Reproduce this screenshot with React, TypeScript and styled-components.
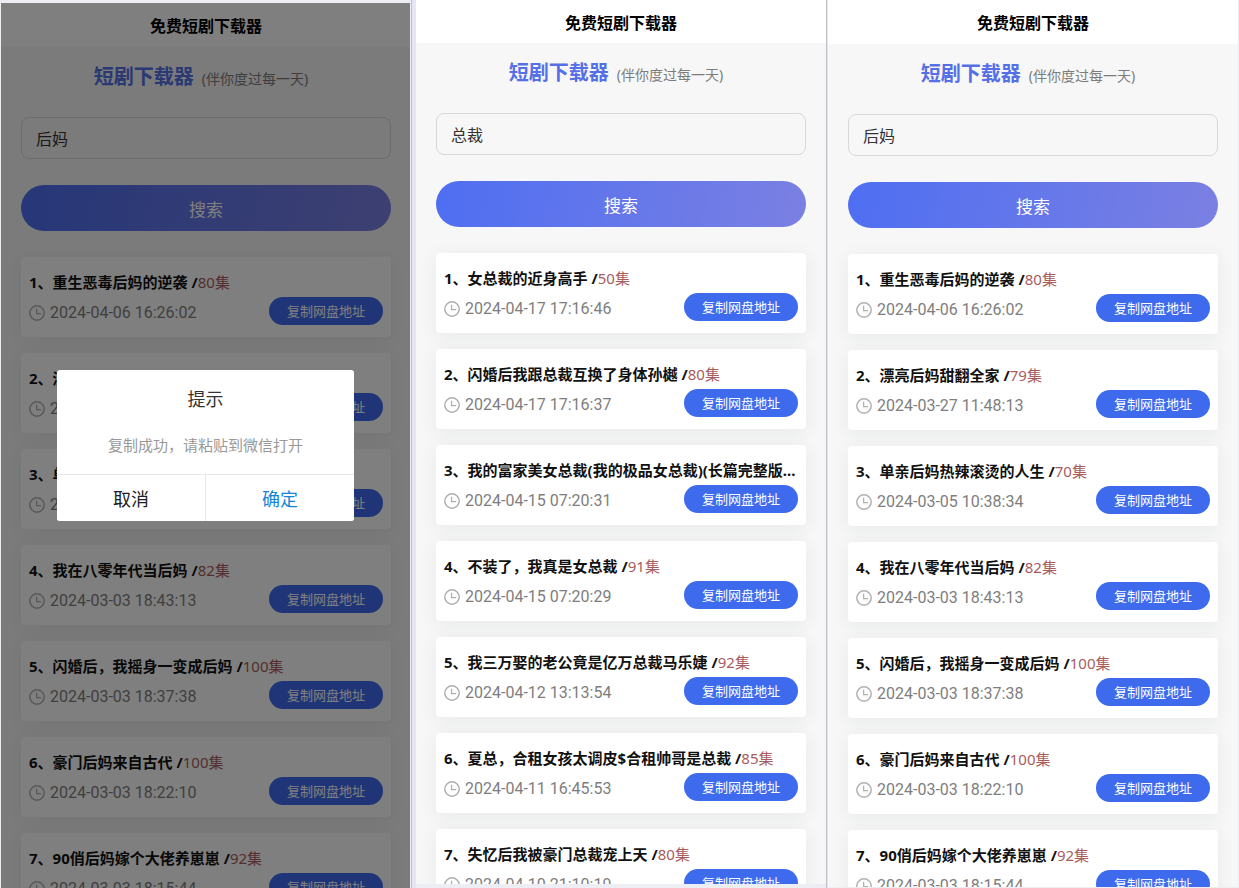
import React from 'react';
import styled, { createGlobalStyle } from 'styled-components';

const GlobalStyle = createGlobalStyle`
  *, *::before, *::after { box-sizing: border-box; }
  body {
    margin: 0;
    background: #ededf4;
    font-family: "Noto Sans", "Noto Sans CJK SC", sans-serif;
    color: #111;
  }
  button, input { font: inherit; }
`;

const Board = styled.main`
  display: flex;
  height: 100vh;
  padding: 0 1px;
  overflow: hidden;
`;

const Gutter = styled.div<{ $size: number }>`
  flex: 0 0 ${(p) => p.$size}px;
  border-left: 1px solid #bfbfca;
  background: #e6e6f2;
`;

const Screen = styled.section<{ $top: number; $bottom: number }>`
  position: relative;
  flex: 1 1 0;
  min-width: 0;
  margin-top: ${(p) => p.$top}px;
  margin-bottom: ${(p) => p.$bottom}px;
  background: #f7f7f7;
  overflow: hidden;
`;

const NavBar = styled.header<{ $height: number }>`
  display: flex;
  align-items: center;
  justify-content: center;
  height: ${(p) => p.$height}px;
  padding-top: 2px;
  background: #fff;
`;

const NavTitle = styled.h1`
  margin: 0;
  font-size: 16px;
  line-height: 24px;
  font-weight: 700;
  color: #000;
`;

const Content = styled.div`
  padding: 0 20px;
`;

const Brand = styled.div`
  display: flex;
  align-items: baseline;
  justify-content: center;
  gap: 8px;
  height: 64px;
  padding: 15px 10px 0 0;
  margin-bottom: 6px;
  line-height: 30px;
`;

const BrandName = styled.h2`
  margin: 0;
  font-size: 20px;
  font-weight: 700;
  color: #5570e6;
`;

const BrandNote = styled.span`
  font-size: 14px;
  color: #7c7c7c;
`;

const SearchForm = styled.form`
  display: flex;
  flex-direction: column;
  gap: 26px;
  margin-bottom: 26px;
`;

const SearchInput = styled.input`
  width: 100%;
  height: 42px;
  padding: 0 14px;
  border: 1px solid #d8d8d8;
  border-radius: 8px;
  background: transparent;
  font-size: 16px;
  color: #333;
  outline: none;
`;

const SearchButton = styled.button`
  height: 46px;
  padding: 0;
  border: 0;
  border-radius: 23px;
  background: linear-gradient(100deg, #4e6ef2, #7b80e2);
  font-size: 17px;
  color: #fff;
`;

const List = styled.ul`
  display: flex;
  flex-direction: column;
  gap: 16px;
  margin: 0;
  padding: 0;
  list-style: none;
`;

const Card = styled.li`
  height: 80px;
  padding: 15px 8px 12px;
  border-radius: 4px;
  background: #fff;
  box-shadow: 0 3px 18px rgba(40, 60, 60, 0.08);
`;

const DramaTitle = styled.h3`
  margin: 0 0 5px;
  font-size: 15px;
  line-height: 20px;
  font-weight: 700;
  white-space: nowrap;
  overflow: hidden;
  text-overflow: ellipsis;
`;

const Episodes = styled.span`
  font-weight: 400;
  color: #a85c5c;
`;

const Meta = styled.div`
  display: flex;
  align-items: center;
  justify-content: space-between;
`;

const Stamp = styled.time`
  display: flex;
  align-items: center;
  gap: 5px;
  padding-top: 4px;
  font-family: Roboto, sans-serif;
  font-size: 16px;
  line-height: 20px;
  color: #7e7e7e;
`;

const CopyButton = styled.button`
  width: 114px;
  height: 28px;
  padding: 0;
  border: 0;
  border-radius: 14px;
  background: #3e6bee;
  font-size: 13px;
  line-height: 20px;
  color: #fff;
`;

const Overlay = styled.div`
  position: absolute;
  inset: 0;
  display: flex;
  align-items: center;
  justify-content: center;
  border-right: 1px solid #efeff4;
  background: rgba(0, 0, 0, 0.5);
`;

const Dialog = styled.div`
  width: 80%;
  max-width: 297px;
  border-radius: 3px;
  background: #fff;
  text-align: center;
  overflow: hidden;
`;

const DialogTitle = styled.h2`
  margin: 0;
  padding: 17px 24px 0;
  font-size: 18px;
  line-height: 24px;
  font-weight: 400;
  color: #333;
`;

const DialogText = styled.p`
  margin: 0;
  padding: 24px 16px 19px;
  font-size: 15px;
  line-height: 20px;
  color: #999;
`;

const DialogActions = styled.div`
  display: flex;
  border-top: 1px solid #e8e8e8;
`;

const DialogButton = styled.button<{ $primary?: boolean }>`
  flex: 1;
  height: 46px;
  padding: 0;
  border: 0;
  border-left: ${(p) => (p.$primary ? '1px solid #e8e8e8' : '0')};
  background: #fff;
  font-size: 18px;
  color: ${(p) => (p.$primary ? '#1486d8' : '#222')};
`;

const ClockIcon = () => (
  <svg width="16" height="16" viewBox="0 0 16 16" fill="none" stroke="#b0b0b0" aria-hidden="true">
    <circle cx="8" cy="8" r="7.2" strokeWidth="1.5" />
    <path d="M7.6 3.8v4.8h4.6" strokeWidth="1.3" />
  </svg>
);

type Drama = { title: string; episodes?: number; time: string };

const stepmother: Drama[] = [
  { title: '重生恶毒后妈的逆袭', episodes: 80, time: '2024-04-06 16:26:02' },
  { title: '漂亮后妈甜翻全家', episodes: 79, time: '2024-03-27 11:48:13' },
  { title: '单亲后妈热辣滚烫的人生', episodes: 70, time: '2024-03-05 10:38:34' },
  { title: '我在八零年代当后妈', episodes: 82, time: '2024-03-03 18:43:13' },
  { title: '闪婚后，我摇身一变成后妈', episodes: 100, time: '2024-03-03 18:37:38' },
  { title: '豪门后妈来自古代', episodes: 100, time: '2024-03-03 18:22:10' },
  { title: '90俏后妈嫁个大佬养崽崽', episodes: 92, time: '2024-03-03 18:15:44' },
];

const president: Drama[] = [
  { title: '女总裁的近身高手', episodes: 50, time: '2024-04-17 17:16:46' },
  { title: '闪婚后我跟总裁互换了身体孙樾', episodes: 80, time: '2024-04-17 17:16:37' },
  { title: '我的富家美女总裁(我的极品女总裁)(长篇完整版...', time: '2024-04-15 07:20:31' },
  { title: '不装了，我真是女总裁', episodes: 91, time: '2024-04-15 07:20:29' },
  { title: '我三万娶的老公竟是亿万总裁马乐婕', episodes: 92, time: '2024-04-12 13:13:54' },
  { title: '夏总，合租女孩太调皮$合租帅哥是总裁', episodes: 85, time: '2024-04-11 16:45:53' },
  { title: '失忆后我被豪门总裁宠上天', episodes: 80, time: '2024-04-10 21:10:19' },
];

type PhoneProps = {
  keyword: string;
  dramas: Drama[];
  top?: number;
  bottom?: number;
  navHeight: number;
  children?: React.ReactNode;
};

const Phone = ({ keyword, dramas, top = 0, bottom = 0, navHeight, children }: PhoneProps) => (
  <Screen $top={top} $bottom={bottom}>
    <NavBar $height={navHeight}>
      <NavTitle>免费短剧下载器</NavTitle>
    </NavBar>
    <Content>
      <Brand>
        <BrandName>短剧下载器</BrandName>
        <BrandNote>(伴你度过每一天)</BrandNote>
      </Brand>
      <SearchForm onSubmit={(e) => e.preventDefault()}>
        <SearchInput type="text" aria-label="剧名" defaultValue={keyword} />
        <SearchButton type="submit">搜索</SearchButton>
      </SearchForm>
      <List>
        {dramas.map((drama, i) => (
          <Card key={drama.time}>
            <DramaTitle>
              {`${i + 1}、${drama.title}`}
              {drama.episodes && (
                <>
                  {' /'}
                  <Episodes>{`${drama.episodes}集`}</Episodes>
                </>
              )}
            </DramaTitle>
            <Meta>
              <Stamp>
                <ClockIcon />
                {drama.time}
              </Stamp>
              <CopyButton type="button">复制网盘地址</CopyButton>
            </Meta>
          </Card>
        ))}
      </List>
    </Content>
    {children}
  </Screen>
);

const App = () => (
  <>
    <GlobalStyle />
    <Board>
      <Phone keyword="后妈" dramas={stepmother} top={3} navHeight={44}>
        <Overlay>
          <Dialog role="dialog" aria-modal="true" aria-labelledby="dialog-title">
            <DialogTitle id="dialog-title">提示</DialogTitle>
            <DialogText>复制成功，请粘贴到微信打开</DialogText>
            <DialogActions>
              <DialogButton type="button">取消</DialogButton>
              <DialogButton type="button" $primary>
                确定
              </DialogButton>
            </DialogActions>
          </Dialog>
        </Overlay>
      </Phone>
      <Gutter $size={5} />
      <Phone keyword="总裁" dramas={president} bottom={4} navHeight={43} />
      <Gutter $size={2} />
      <Phone keyword="后妈" dramas={stepmother} bottom={1} navHeight={44} />
    </Board>
  </>
);

export default App;
